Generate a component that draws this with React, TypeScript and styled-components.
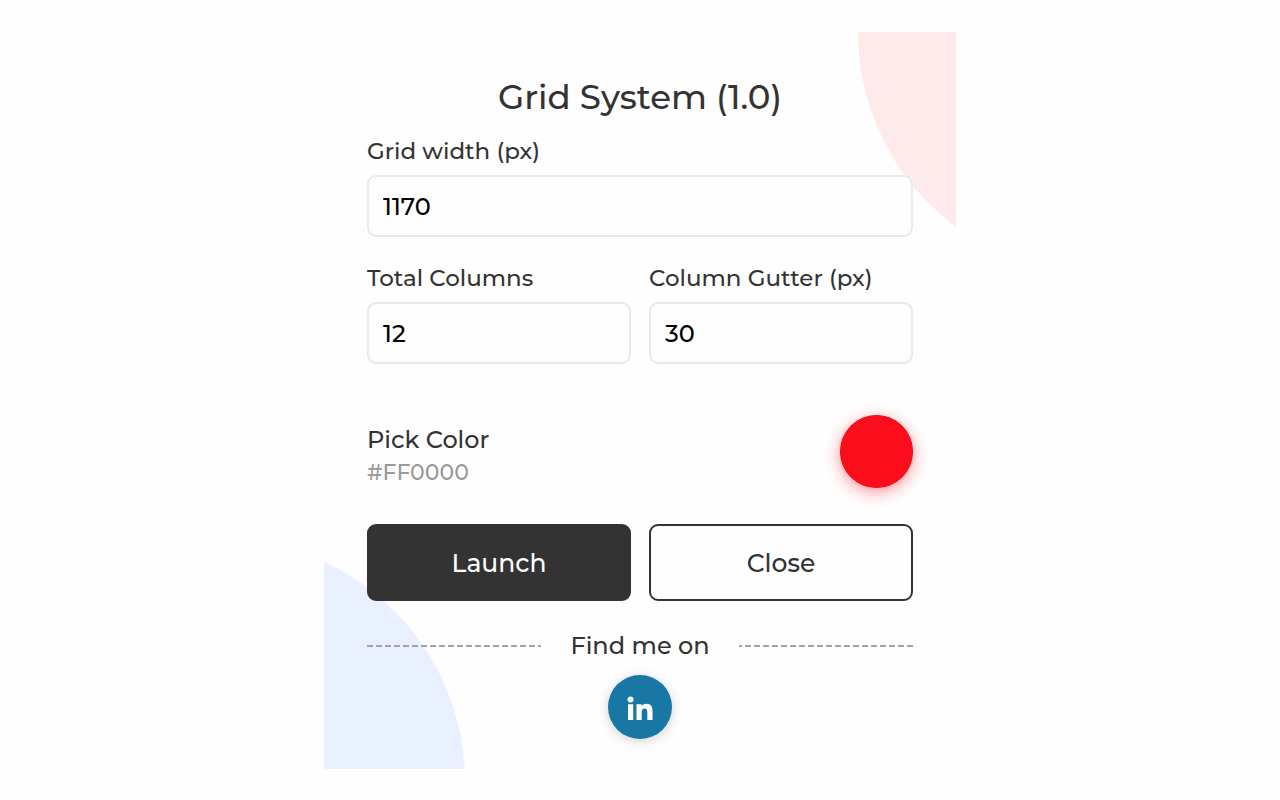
import React, { useState } from "react";
import styled, { createGlobalStyle, css } from "styled-components";

const GlobalStyle = createGlobalStyle`
  *, *::before, *::after { box-sizing: border-box; }
  body {
    margin: 0;
    background: #fefefe;
    color: #333;
    font-family: Montserrat, Inter, sans-serif;
    font-size: 24px;
    font-weight: 500;
    line-height: 32px;
  }
`;

const Page = styled.main`
  display: flex;
  justify-content: center;
  padding: 32px 16px 24px;
`;

const Panel = styled.form`
  position: relative;
  overflow: hidden;
  width: 100%;
  max-width: 632px;
  padding: 43px 43px 30px;
  background: #fefefe;
`;

const Blob = styled.span<{ $corner: "top" | "bottom" }>`
  position: absolute;
  width: 486px;
  height: 486px;
  border-radius: 50%;
  ${({ $corner }) =>
    $corner === "top"
      ? css`
          top: -243px;
          right: -388px;
          background: #ffeaeb;
        `
      : css`
          bottom: -256px;
          left: -345px;
          background: #e9f0ff;
        `}
`;

const Content = styled.div`
  position: relative;
`;

const Title = styled.h1`
  margin: 0 0 16px;
  font-size: 34px;
  line-height: 44px;
  font-weight: 500;
  text-align: center;
`;

const Columns = styled.div`
  display: grid;
  grid-template-columns: 1fr 1fr;
  gap: 18px;
`;

const Field = styled.div`
  display: flex;
  flex-direction: column;
  gap: 8px;
  min-width: 0;
  margin-bottom: 25px;
`;

const Label = styled.label`
  font-size: 23px;
`;

const TextInput = styled.input`
  width: 100%;
  height: 62px;
  padding: 0 14px;
  border: 2px solid #e9e9e9;
  border-radius: 9px;
  background: #fefefe;
  color: #000;
  font: inherit;
  outline: none;
`;

const ColorRow = styled.div`
  display: flex;
  justify-content: space-between;
  align-items: flex-start;
  margin: 26px 0 35px;
`;

const ColorText = styled.div`
  display: flex;
  flex-direction: column;
  padding-top: 8px;
  line-height: 33px;
`;

const HexValue = styled.output`
  color: #999;
  font-size: 22px;
`;

const Swatch = styled.input`
  appearance: none;
  width: 73px;
  height: 73px;
  padding: 0;
  border: 0;
  border-radius: 50%;
  background: #fc0d1b;
  box-shadow: 0 4px 16px rgba(252, 13, 27, 0.45);
  cursor: pointer;
  &::-webkit-color-swatch-wrapper { padding: 0; }
  &::-webkit-color-swatch { border: 0; border-radius: 50%; }
`;

const Button = styled.button<{ $filled?: boolean }>`
  height: 77px;
  border: 2px solid #333;
  border-radius: 9px;
  background: ${({ $filled }) => ($filled ? "#333" : "#fefefe")};
  color: ${({ $filled }) => ($filled ? "#fff" : "#333")};
  font: inherit;
  font-size: 25px;
  cursor: pointer;
`;

const Divider = styled.div`
  display: flex;
  align-items: center;
  gap: 29px;
  margin: 29px 0 13px;
`;

const Dashes = styled.span<{ $toward: "left" | "right" }>`
  flex: 1;
  height: 2px;
  background: repeating-linear-gradient(
    to ${({ $toward }) => $toward},
    #a3a3a3 0 6px,
    transparent 6px 9px
  );
`;

const SocialLink = styled.a`
  display: flex;
  align-items: center;
  justify-content: center;
  width: 64px;
  height: 64px;
  margin: 0 auto;
  border-radius: 50%;
  background: #1977a6;
  color: #fff;
  box-shadow: 0 2px 12px rgba(0, 0, 0, 0.18);
`;

export default function App() {
  const [color, setColor] = useState("#fc0d1b");
  const hex = color === "#fc0d1b" ? "#FF0000" : color.toUpperCase();

  return (
    <>
      <GlobalStyle />
      <Page>
        <Panel onSubmit={(e) => e.preventDefault()}>
          <Blob $corner="top" />
          <Blob $corner="bottom" />
          <Content>
            <Title>Grid System (1.0)</Title>
            <Field>
              <Label htmlFor="width">Grid width (px)</Label>
              <TextInput id="width" inputMode="numeric" defaultValue="1170" />
            </Field>
            <Columns>
              <Field>
                <Label htmlFor="columns">Total Columns</Label>
                <TextInput id="columns" inputMode="numeric" defaultValue="12" />
              </Field>
              <Field>
                <Label htmlFor="gutter">Column Gutter (px)</Label>
                <TextInput id="gutter" inputMode="numeric" defaultValue="30" />
              </Field>
            </Columns>
            <ColorRow>
              <ColorText>
                <label htmlFor="color">Pick Color</label>
                <HexValue htmlFor="color">{hex}</HexValue>
              </ColorText>
              <Swatch
                id="color"
                type="color"
                value={color}
                onChange={(e) => setColor(e.target.value)}
              />
            </ColorRow>
            <Columns>
              <Button type="submit" $filled>Launch</Button>
              <Button type="button">Close</Button>
            </Columns>
            <Divider>
              <Dashes $toward="right" />
              <span>Find me on</span>
              <Dashes $toward="left" />
            </Divider>
            <SocialLink href="#linkedin" aria-label="LinkedIn">
              <svg width="28" height="28" viewBox="0 0 28 28" fill="currentColor" aria-hidden="true">
                <circle cx="4.500" cy="6.500" r="3" />
                <path d="M2 11.200h5.200V27H2zM10.500 11.200h5v2.100c.8-1.500 2.500-2.500 4.800-2.500 4.800 0 6.200 2.900 6.200 7.200V27h-5.200v-7.500c0-2.200-.3-4-2.600-4s-3 1.700-3 3.900V27h-5.200z" />
              </svg>
            </SocialLink>
          </Content>
        </Panel>
      </Page>
    </>
  );
}
